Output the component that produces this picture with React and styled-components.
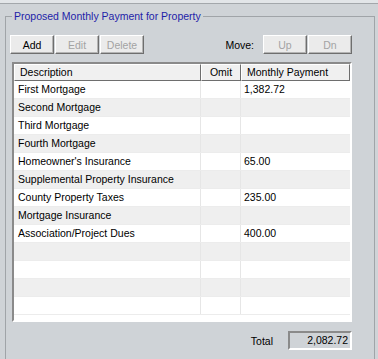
import React from 'react';
import styled, { createGlobalStyle } from 'styled-components';

const GlobalStyle = createGlobalStyle`
  body {
    margin: 0;
    background: #cfd3d7;
    font-family: "Liberation Sans", Arial, sans-serif;
    font-size: 10.5px;
    color: #000;
  }
`;

const rows = [
  { desc: 'First Mortgage', amount: '1,382.72' },
  { desc: 'Second Mortgage', amount: '' },
  { desc: 'Third Mortgage', amount: '' },
  { desc: 'Fourth Mortgage', amount: '' },
  { desc: "Homeowner's Insurance", amount: '65.00' },
  { desc: 'Supplemental Property Insurance', amount: '' },
  { desc: 'County Property Taxes', amount: '235.00' },
  { desc: 'Mortgage Insurance', amount: '' },
  { desc: 'Association/Project Dues', amount: '400.00' },
  { desc: '', amount: '' },
  { desc: '', amount: '' },
  { desc: '', amount: '' },
  { desc: '', amount: '' },
];

function App() {
  return (
    <>
      <GlobalStyle />
      <Window>
        <TopStrip />
        <GroupBox>
          <Legend>Proposed Monthly Payment for Property</Legend>
          <Toolbar>
            <ButtonGroup>
              <Button>Add</Button>
              <Button disabled>Edit</Button>
              <Button disabled>Delete</Button>
            </ButtonGroup>
            <ButtonGroup>
              <MoveLabel>Move:</MoveLabel>
              <Button disabled>Up</Button>
              <Button disabled>Dn</Button>
            </ButtonGroup>
          </Toolbar>

          <Grid>
            <HeaderRow>
              <HeaderCell>Description</HeaderCell>
              <HeaderCell $center>Omit</HeaderCell>
              <HeaderCell>Monthly Payment</HeaderCell>
            </HeaderRow>
            {rows.map((r, i) => (
              <Row key={i} $alt={i % 2 === 1}>
                <Cell>{r.desc}</Cell>
                <Cell></Cell>
                <Cell $amount>{r.amount}</Cell>
              </Row>
            ))}
          </Grid>

          <TotalRow>
            <TotalLabel>Total</TotalLabel>
            <TotalBox>2,082.72</TotalBox>
          </TotalRow>
        </GroupBox>
      </Window>
    </>
  );
}

export default App;

const Window = styled.div`
  width: 378px;
  height: 359px;
  overflow: hidden;
  display: flex;
  flex-direction: column;
`;

const TopStrip = styled.div`
  height: 3px;
  flex-shrink: 0;
  background: #e2e5e8;
  border-bottom: 1px solid #a3a7ab;
`;

const GroupBox = styled.fieldset`
  margin: 5px 0 0 5px;
  width: 370px;
  height: 420px;
  box-sizing: border-box;
  padding: 12px 0 0 4px;
  border: 1px solid #a0a4a8;
  border-bottom: none;
  min-width: 0;
  flex-shrink: 0;
`;

const Legend = styled.legend`
  margin-left: 2px;
  padding: 0 2px;
  line-height: 14px;
  color: #1e1ea8;
`;

const Toolbar = styled.div`
  width: 342px;
  height: 19px;
  display: flex;
  justify-content: space-between;
  align-items: center;
`;

const ButtonGroup = styled.div`
  display: flex;
  align-items: center;
  gap: 1px;
`;

const Button = styled.button`
  width: 44px;
  height: 19px;
  box-sizing: border-box;
  padding: 0;
  font: inherit;
  background: #ebebeb;
  color: #000;
  border: 1px solid;
  border-color: #ffffff #6e6e6e #6e6e6e #ffffff;
  box-shadow: inset -1px -1px 0 #b4b4b4;

  &:disabled {
    color: #a3a3a3;
  }
`;

const MoveLabel = styled.span`
  margin-right: 8px;
`;

const Grid = styled.div`
  margin: 8px 0 0 2px;
  width: 340px;
  height: 260px;
  box-sizing: border-box;
  background: #fff;
  border: 2px solid;
  border-color: #8a8a8a #ffffff #ffffff #8a8a8a;
  overflow: hidden;
`;

const columns = '187px 40px 109px';

const HeaderRow = styled.div`
  display: grid;
  grid-template-columns: ${columns};
  height: 17px;
`;

const HeaderCell = styled.div`
  box-sizing: border-box;
  padding: 0 ${(p) => (p.$center ? '0' : '5px')};
  text-align: ${(p) => (p.$center ? 'center' : 'left')};
  line-height: 15px;
  background: #f0f0f0;
  border: 1px solid;
  border-color: #ffffff #6e6e6e #6e6e6e #ffffff;
  white-space: nowrap;
`;

const Row = styled.div`
  display: grid;
  grid-template-columns: ${columns};
  height: 18px;
  background: ${(p) => (p.$alt ? '#efefef' : '#ffffff')};
  border-bottom: 1px solid #ececec;
  box-sizing: border-box;
`;

const Cell = styled.div`
  padding-left: ${(p) => (p.$amount ? '3px' : '4px')};
  line-height: 17px;
  border-right: 1px solid #e6e6e6;
  white-space: nowrap;
  overflow: hidden;

  &:last-child {
    border-right: none;
  }
`;

const TotalRow = styled.div`
  width: 342px;
  margin-top: 9px;
  display: flex;
  justify-content: flex-end;
  align-items: center;
`;

const TotalLabel = styled.span`
  margin-right: 15px;
`;

const TotalBox = styled.div`
  width: 64px;
  height: 19px;
  box-sizing: border-box;
  padding-right: 2px;
  text-align: right;
  line-height: 15px;
  border: 2px solid;
  border-color: #8a8a8a #ffffff #ffffff #8a8a8a;
`;
